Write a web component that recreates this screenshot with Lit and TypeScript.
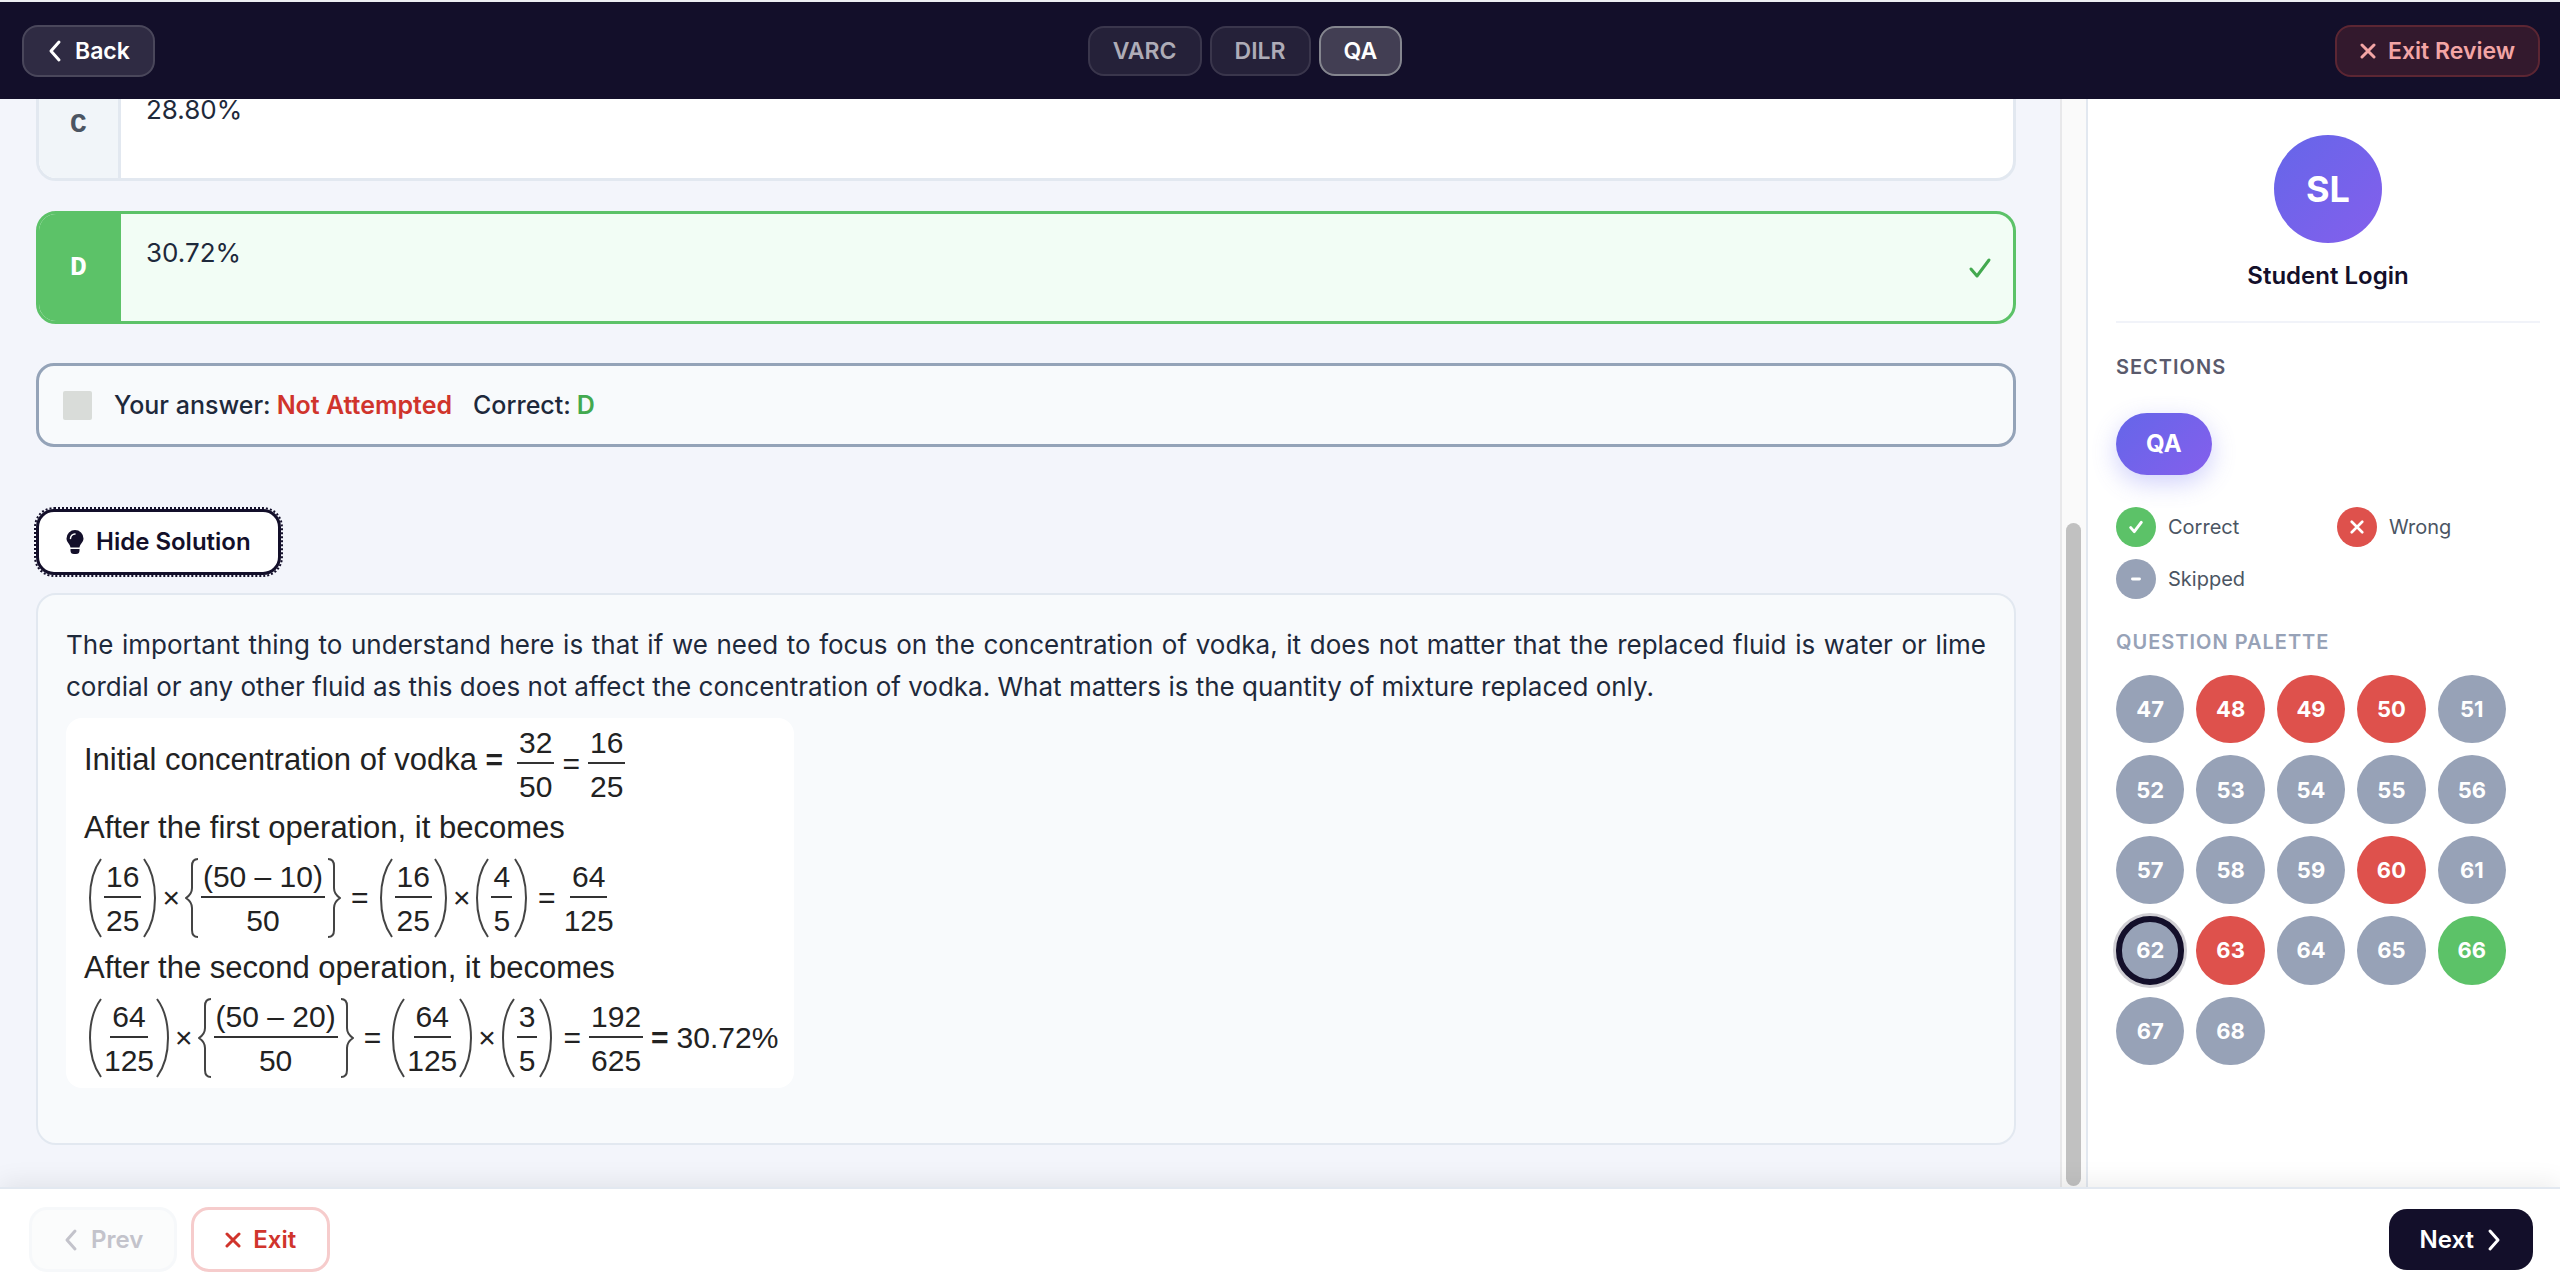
import { LitElement, html, css, svg, nothing, TemplateResult } from "lit";
import { customElement, property, state } from "lit/decorators.js";
import { classMap } from "lit/directives/class-map.js";

type Status = "correct" | "wrong" | "skipped";

interface Question {
  id: number;
  status: Status;
}

const WRONG = [48, 49, 50, 60, 63];
const CORRECT = [66];

const QUESTIONS: Question[] = Array.from({ length: 22 }, (_, i) => {
  const id = 47 + i;
  const status: Status = WRONG.includes(id) ? "wrong" : CORRECT.includes(id) ? "correct" : "skipped";
  return { id, status };
});

const stroke = (viewBox: string, d: string, cls: string) => html`
  <svg class=${cls} viewBox=${viewBox} fill="none" stroke="currentColor" stroke-linecap="round" stroke-linejoin="round" aria-hidden="true">
    <path d=${d}></path>
  </svg>`;

const chevronLeft = stroke("0 0 16 24", "M12 3 L4 12 L12 21", "chevron");
const chevronRight = stroke("0 0 16 24", "M4 3 L12 12 L4 21", "chevron");
const cross = stroke("0 0 16 16", "M2 2 L14 14 M14 2 L2 14", "cross");
const tick = stroke("0 0 24 24", "M3 13 L9 20 L21 4", "tick");

/** Worked solution typeset with stacked fractions. */
@customElement("worked-solution")
export class WorkedSolution extends LitElement {
  static styles = css`
    :host {
      display: block;
      width: fit-content;
      box-sizing: border-box;
      padding: 2px 16px 8px 18px;
      border-radius: 16px;
      background: #fff;
      color: #222;
      font: 30px/34px "Liberation Sans", Arial, sans-serif;
    }
    .line {
      display: flex;
      align-items: center;
      white-space: pre;
    }
    .caption {
      height: 56px;
      font-size: 31px;
    }
    .first {
      height: 80px;
    }
    .label {
      font-size: 31px;
    }
    .maths {
      height: 84px;
      padding-left: 2px;
    }
    .frac {
      display: flex;
      flex-direction: column;
      align-items: center;
      padding-top: 6px;
    }
    .first .frac {
      padding-top: 14px;
    }
    .first .eq {
      padding-top: 8px;
    }
    .num {
      padding: 0 2px;
      border-bottom: 2px solid #333;
      line-height: 38px;
    }
    .den {
      line-height: 46px;
    }
    .fence {
      width: 14px;
      height: 80px;
      margin: 0 2px;
      flex: none;
      stroke: #444;
      stroke-width: 2;
      fill: none;
    }
    .times {
      margin: 0 3px;
    }
    .eq {
      margin: 0 8px;
    }
    .equals {
      font-weight: 700;
      margin: 0 8px;
    }
    .first .equals {
      margin: 0 14px 0 0;
    }
  `;

  private frac(n: string, d: string) {
    return html`<span class="frac"><span class="num">${n}</span><span class="den">${d}</span></span>`;
  }

  private fence(d: string) {
    return html`<svg class="fence" viewBox="0 0 14 80" aria-hidden="true">${svg`<path d=${d}></path>`}</svg>`;
  }

  private paren(n: string, d: string) {
    return html`${this.fence("M13 1 Q2 16 2 40 Q2 64 13 79")}${this.frac(n, d)}${this.fence("M1 1 Q12 16 12 40 Q12 64 1 79")}`;
  }

  private brace(n: string, d: string) {
    return html`${this.fence("M13 1 Q7 1 7 8 V30 Q7 36 1 40 Q7 44 7 50 V72 Q7 79 13 79")}${this.frac(n, d)}${this.fence(
      "M1 1 Q7 1 7 8 V30 Q7 36 13 40 Q7 44 7 50 V72 Q7 79 1 79"
    )}`;
  }

  render() {
    const eq = html`<span class="eq">=</span>`;
    const times = html`<span class="times">×</span>`;
    return html`
      <div class="line first"><span class="label">Initial concentration of vodka </span><span class="equals">=</span>${this.frac("32", "50")}${eq}${this.frac("16", "25")}</div>
      <div class="line caption">After the first operation, it becomes</div>
      <div class="line maths">
        ${this.paren("16", "25")}${times}${this.brace("(50 – 10)", "50")}${eq}${this.paren("16", "25")}${times}${this.paren("4", "5")}${eq}${this.frac("64", "125")}
      </div>
      <div class="line caption">After the second operation, it becomes</div>
      <div class="line maths">
        ${this.paren("64", "125")}${times}${this.brace("(50 – 20)", "50")}${eq}${this.paren("64", "125")}${times}${this.paren("3", "5")}${eq}${this.frac("192", "625")}<span class="equals">=</span><span>30.72%</span>
      </div>
    `;
  }
}

@customElement("answer-option")
export class AnswerOption extends LitElement {
  @property() letter = "";
  @property() text = "";
  @property({ type: Boolean }) correct = false;

  static styles = css`
    :host {
      display: block;
    }
    .option {
      display: flex;
      min-height: 107px;
      border: 3px solid #e2e8f0;
      border-radius: 20px;
      background: #fff;
      overflow: hidden;
      color: #1e293b;
    }
    .letter {
      width: 79px;
      flex: none;
      display: grid;
      place-items: center;
      background: #f1f5f9;
      border-right: 3px solid #e2e8f0;
      color: #4b5563;
      font: 700 28px/32px "Liberation Mono", monospace;
    }
    .text {
      flex: 1;
      padding: 18px 25px;
      font-size: 26px;
      line-height: 42px;
    }
    .option.correct {
      border-color: #5cc268;
      background: #f2fdf5;
    }
    .correct .letter {
      background: #5cc268;
      border-color: #5cc268;
      color: #fff;
    }
    .tick {
      width: 24px;
      height: 24px;
      stroke-width: 3;
      align-self: center;
      margin-right: 21px;
      color: #43a94f;
    }
  `;

  render() {
    return html`
      <div class=${classMap({ option: true, correct: this.correct })}>
        <span class="letter">${this.letter}</span>
        <span class="text">${this.text}</span>
        ${this.correct ? tick : nothing}
      </div>
    `;
  }
}

@customElement("app-root")
export class AppRoot extends LitElement {
  @state() private section = "QA";
  @state() private current = 62;
  @state() private showSolution = true;

  static styles = css`
    :host {
      display: flex;
      flex-direction: column;
      height: 100vh;
      box-sizing: border-box;
      overflow: hidden;
      border-top: 2px solid #eceef2;
      font-family: Inter, "Liberation Sans", sans-serif;
      color: #1e293b;
      background: #f3f5fb;
    }
    * {
      box-sizing: border-box;
    }
    button {
      display: inline-flex;
      align-items: center;
      justify-content: center;
      flex: none;
      margin: 0;
      font: 600 24px/30px Inter, "Liberation Sans", sans-serif;
      cursor: pointer;
    }
    .chevron {
      width: 16px;
      height: 24px;
      stroke-width: 3;
    }
    .cross {
      width: 16px;
      height: 16px;
      stroke-width: 3;
    }

    .topbar {
      display: flex;
      align-items: center;
      justify-content: space-between;
      flex: none;
      height: 97px;
      padding: 0 20px 0 22px;
      background: #130f2a;
    }
    .topbar button {
      font-size: 23px;
    }
    .back,
    .exit-review {
      height: 52px;
      gap: 12px;
      padding: 0 23px;
      border-radius: 16px;
      border: 2px solid #4a475b;
      background: #2f2b43;
      color: #fff;
    }
    .exit-review {
      border-color: #5c2633;
      background: #33192d;
      color: #f3a5a5;
    }
    .tabs {
      display: flex;
      gap: 8px;
    }
    .tab {
      height: 50px;
      padding: 0 23px;
      border-radius: 16px;
      border: 2px solid #3a364c;
      background: #252139;
      color: #aeacb7;
    }
    .tab.active {
      border-color: #85868f;
      background: #423e53;
      color: #fff;
    }

    .body {
      display: flex;
      flex: 1;
      min-height: 0;
    }
    .content {
      display: flex;
      flex-direction: column;
      justify-content: flex-end;
      flex: 1;
      min-width: 0;
      padding: 0 44px 42px 36px;
      overflow: hidden;
    }
    .options {
      display: flex;
      flex-direction: column;
      gap: 30px;
    }
    .summary {
      display: flex;
      align-items: center;
      margin: 39px 0 62px;
      min-height: 84px;
      padding: 0 24px;
      border: 3px solid #94a3b8;
      border-radius: 18px;
      background: #f8fafc;
      font-size: 25px;
      line-height: 36px;
      font-weight: 500;
    }
    .square {
      width: 29px;
      height: 29px;
      margin-right: 22px;
      border-radius: 2px;
      background: #d9dcd9;
    }
    .summary strong {
      font-weight: 600;
    }
    .none {
      color: #d0342c;
      margin: 0 21px 0 6px;
    }
    .right {
      color: #43a94f;
      margin-left: 6px;
    }
    .toggle {
      align-self: flex-start;
      height: 66px;
      gap: 12px;
      padding: 0 27px;
      border: 3px solid #130f2a;
      border-radius: 18px;
      outline: 2px dotted #130f2a;
      background: #fff;
      color: #130f2a;
    }
    .bulb {
      width: 18px;
      height: 24px;
      fill: currentColor;
    }
    .solution {
      margin-top: 18px;
      padding: 29px 28px 55px;
      border: 2px solid #e2e8f0;
      border-radius: 20px;
      background: #f8fafc;
    }
    .solution p {
      margin: 0 0 10px;
      font-size: 26px;
      line-height: 42px;
      text-align: justify;
    }

    .scroll-track {
      flex: none;
      width: 26px;
      padding: 424px 5px 1px 4px;
      border-left: 2px solid #e8e8ea;
      background: #fafafa;
    }
    .scroll-thumb {
      width: 15px;
      height: 100%;
      border-radius: 8px;
      background: #c1c1c1;
    }

    .sidebar {
      flex: none;
      width: 474px;
      padding: 36px 20px 0 28px;
      border-left: 2px solid #e2e8f0;
      background: #fff;
    }
    .profile {
      display: flex;
      flex-direction: column;
      align-items: center;
      gap: 17px;
      padding-bottom: 29px;
      border-bottom: 2px solid #f1f3f9;
    }
    .avatar {
      display: grid;
      place-items: center;
      width: 108px;
      height: 108px;
      border-radius: 50%;
      background: linear-gradient(135deg, #6566e9, #845fec);
      color: #fff;
      font-size: 36px;
      font-weight: 700;
    }
    .name {
      color: #130f2a;
      font-size: 24px;
      line-height: 32px;
      font-weight: 600;
    }
    h2 {
      margin: 0;
      font-size: 20px;
      line-height: 24px;
      font-weight: 600;
      letter-spacing: 1px;
      text-transform: uppercase;
    }
    .sections-title {
      margin-top: 32px;
      color: #5a5a6c;
    }
    .pill {
      height: 62px;
      margin: 34px 0 32px;
      padding: 0 30px;
      border: 0;
      border-radius: 31px;
      background: linear-gradient(135deg, #6566e9, #845fec);
      box-shadow: 0 8px 24px rgba(99, 102, 241, 0.3);
      color: #fff;
      font-weight: 700;
    }
    .legend {
      display: grid;
      grid-template-columns: 1fr 1fr;
      gap: 12px 18px;
      margin: 0 0 31px;
      padding: 0;
      list-style: none;
      font-size: 20px;
      line-height: 26px;
      color: #4b5563;
    }
    .legend li {
      display: flex;
      align-items: center;
      gap: 12px;
    }
    .dot {
      display: grid;
      place-items: center;
      width: 40px;
      height: 40px;
      border-radius: 50%;
      color: #fff;
    }
    .dot svg {
      width: 14px;
      height: 14px;
      stroke-width: 5;
    }
    .dot .cross {
      stroke-width: 3;
    }
    .correct {
      background: #5cc268;
    }
    .wrong {
      background: #de514c;
    }
    .skipped {
      background: #97a2b7;
    }
    .palette-title {
      color: #97a2b7;
    }
    .palette {
      display: grid;
      grid-template-columns: repeat(5, 1fr);
      gap: 12px;
      max-width: 390px;
      margin-top: 21px;
    }
    .q {
      aspect-ratio: 1;
      padding: 0;
      border: 0;
      border-radius: 50%;
      color: #fff;
      font-size: 22px;
      font-weight: 700;
    }
    .q.current {
      border: 6px solid #130f2a;
      box-shadow: 0 0 0 3px rgba(19, 15, 42, 0.2);
    }

    .footer {
      position: relative;
      display: flex;
      align-items: center;
      gap: 14px;
      flex: none;
      padding: 18px 27px 11px 29px;
      border-top: 2px solid #e2e8f0;
      background: #fff;
      box-shadow: 0 -4px 24px rgba(0, 0, 0, 0.08);
    }
    .nav {
      height: 65px;
      gap: 12px;
      padding: 0 31px;
      border: 3px solid #f6cccc;
      border-radius: 18px;
      background: #fff;
      color: #d0342c;
    }
    .prev {
      border-color: #f6f8fa;
      background: #fbfcfc;
      color: #c3c3cb;
      cursor: default;
    }
    .next {
      height: 61px;
      margin-left: auto;
      border: 0;
      background: #130f2a;
      color: #fff;
    }
  `;

  private legendItem(status: Status, label: string, icon: TemplateResult) {
    return html`<li><span class="dot ${status}">${icon}</span>${label}</li>`;
  }

  render() {
    return html`
      <header class="topbar">
        <button class="back">${chevronLeft}Back</button>
        <nav class="tabs" aria-label="Sections">
          ${["VARC", "DILR", "QA"].map(
            (s) => html`<button class=${classMap({ tab: true, active: s === this.section })} @click=${() => (this.section = s)}>${s}</button>`
          )}
        </nav>
        <button class="exit-review">${cross}Exit Review</button>
      </header>

      <div class="body">
        <main class="content">
          <div class="options">
            <answer-option letter="C" text="28.80%"></answer-option>
            <answer-option letter="D" text="30.72%" correct></answer-option>
          </div>
          <div class="summary">
            <span class="square"></span>Your answer:<strong class="none">Not Attempted</strong>Correct:<strong class="right">D</strong>
          </div>
          <button class="toggle" @click=${() => (this.showSolution = !this.showSolution)}>
            <svg class="bulb" viewBox="0 0 18 24" aria-hidden="true">
              <path d="M9 0 A8.5 8.5 0 0 1 17.5 8.5 C17.5 12 14 14 13.5 17.5 H4.5 C4 14 .5 12 .5 8.5 A8.5 8.5 0 0 1 9 0 Z"></path>
              <path d="M4.5 19 H13.5 V20.5 A3.5 3.5 0 0 1 10 24 H8 A3.5 3.5 0 0 1 4.5 20.5 Z"></path>
              <path d="M4.5 8.5 A4.5 4.5 0 0 1 9 4" fill="none" stroke="#fff" stroke-width="1.5" stroke-linecap="round"></path>
            </svg>
            Hide Solution
          </button>
          ${this.showSolution
            ? html`<section class="solution">
                <p>
                  The important thing to understand here is that if we need to focus on the concentration of vodka, it does not matter that the replaced fluid is
                  water or lime cordial or any other fluid as this does not affect the concentration of vodka. What matters is the quantity of mixture replaced
                  only.
                </p>
                <worked-solution></worked-solution>
              </section>`
            : nothing}
        </main>
        <div class="scroll-track"><div class="scroll-thumb"></div></div>

        <aside class="sidebar">
          <div class="profile">
            <span class="avatar">SL</span>
            <span class="name">Student Login</span>
          </div>
          <h2 class="sections-title">Sections</h2>
          <button class="pill">QA</button>
          <ul class="legend">
            ${this.legendItem("correct", "Correct", tick)} ${this.legendItem("wrong", "Wrong", cross)}
            ${this.legendItem("skipped", "Skipped", stroke("0 0 24 24", "M6 12 H18", "minus"))}
          </ul>
          <h2 class="palette-title">Question Palette</h2>
          <div class="palette">
            ${QUESTIONS.map(
              (q) => html`<button class=${classMap({ q: true, [q.status]: true, current: q.id === this.current })} @click=${() => (this.current = q.id)}>${q.id}</button>`
            )}
          </div>
        </aside>
      </div>

      <footer class="footer">
        <button class="nav prev" aria-disabled="true">${chevronLeft}Prev</button>
        <button class="nav">${cross}Exit</button>
        <button class="nav next">Next${chevronRight}</button>
      </footer>
    `;
  }
}
